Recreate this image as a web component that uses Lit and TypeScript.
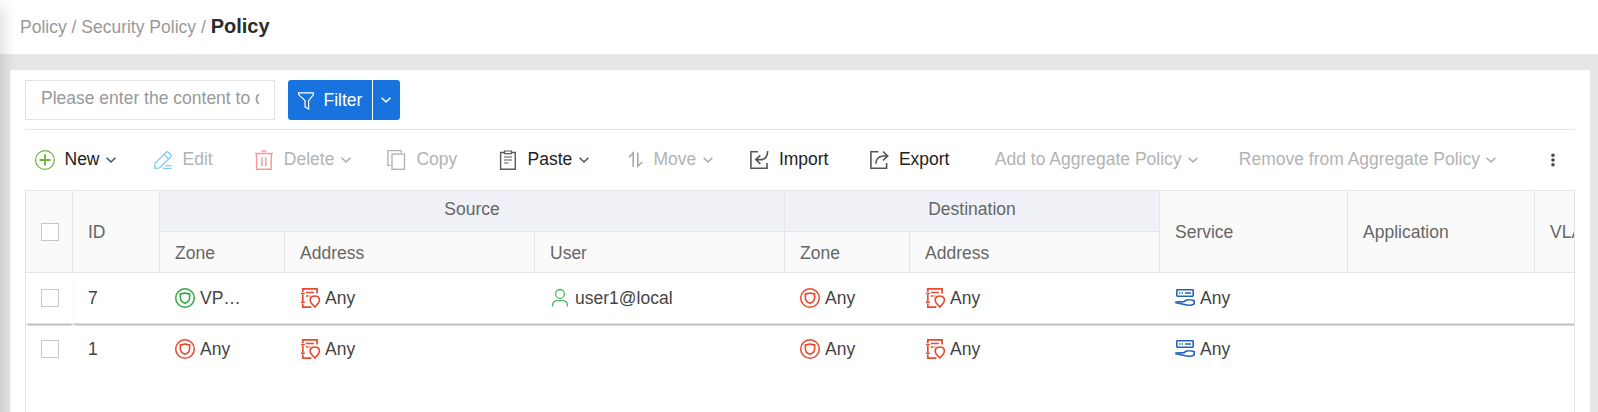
import { LitElement, html, css, svg, nothing } from "lit";
import { customElement, property } from "lit/decorators.js";

const glyphs: Record<string, unknown> = {
  plus: svg`<g stroke="#6db33f" fill="none"><circle cx="10" cy="10" r="9.4" stroke-width="1.2"/><path d="M4.5 10h11M10 4.5v11" stroke-width="1.9"/></g>`,
  edit: svg`<g stroke="#7fcbfb" fill="none" stroke-width="1.3"><path d="M1.7 18.3 2 13.2 13.2 2.2Q14.2 1.3 15.2 2.2L17.8 4.8Q18.7 5.8 17.8 6.8L6.7 17.8ZM11 4.4 15.6 9"/><path d="M12.3 15.6h6.2M9.8 18.4h9"/></g>`,
  trash: svg`<g stroke="#f29a98" fill="none"><path d="M7.3 .9h5M1 3.6h18" stroke-width="1.5"/><path d="M2.6 4v15.2h14.6V4" stroke-width="1.4"/><path d="M8 7.2v8.8M11.8 7.2v8.8" stroke-width="1.4"/></g>`,
  copy: svg`<g stroke="#b0b0b0" fill="none" stroke-width="1.3"><path d="M3.5 15.4H.9V.7h13.2v2"/><rect x="5" y="4" width="12.5" height="15.3"/></g>`,
  paste: svg`<g stroke="#5c5c5c" fill="none" stroke-width="1.4"><path d="M6 2.5H2.6v16.8h14.7V2.5H14"/><path d="M6.4 1h7v2.6h-7z" stroke-width="1.2"/><path d="M6 7h8M6 10h8M6 13h4.5" stroke-width="1.2"/></g>`,
  move: svg`<g stroke="#a8a8a8" fill="none" stroke-width="1.6"><path d="M4.9 7.2 9.2 3v14M13.8 2.6v13.6L18.4 12"/></g>`,
  import: svg`<g stroke="#555" fill="none" stroke-width="1.6"><path d="M9 1.8H1.9v16.4H18V13"/><path d="M11.3 5.3 6.8 9.6l4.5 4.2M7 9.6h5.5Q18.4 9 18.7 1"/></g>`,
  export: svg`<g stroke="#555" fill="none" stroke-width="1.6"><path d="M9.4 1.8H1.9v16.4H17.6V13"/><path d="M14 1.7l4.7 4.3L14 10.3M18.5 6H14Q7.2 6.6 6.8 13.8"/></g>`,
  filter: svg`<path d="M2.6 1.8h14.8v1.8L12.6 9.6v8.4l-3.6-2.2V9.6L2.6 3.6z" stroke="#fff" stroke-width="1.2" fill="none"/>`,
  dots: svg`<g fill="#4a4a4a"><circle cx="10" cy="5.3" r="1.8"/><circle cx="10" cy="10" r="1.8"/><circle cx="10" cy="14.7" r="1.8"/></g>`,
  zone: svg`<g stroke="currentColor" fill="none"><circle cx="10" cy="10" r="9.3" stroke-width="1.5"/><path d="M10 5.1Q12.4 5.9 14.6 5.9V10.2Q14.4 13.6 10 15.3 5.6 13.6 5.4 10.2V5.9Q7.6 5.9 10 5.1z" stroke-width="1.6"/></g>`,
  address: svg`<g stroke="#e8492f" fill="none" stroke-width="1.7"><path d="M2.8 4V.9h14.3V5.5M2.8 6.4V13.6M2.8 15.6V19.1H11.4"/><path d="M1 5.5h3.8M1 14.3h3.8M6 4.4h7.9M6 8h2.4M9.4 8h1" stroke-width="1.5"/><path d="M14.8 19 11.2 15Q8.7 10.6 12.1 8.5 14.8 7.4 17.5 8.5 20.8 10.6 18.4 15z" stroke-width="1.6"/></g>`,
  user: svg`<g stroke="#4db863" fill="none" stroke-width="1.3"><circle cx="10" cy="5.9" r="4.4"/><path d="M2.6 18.6V17Q2.8 12.7 7.6 12.7h4.8Q17.2 12.7 17.4 17V18.6"/></g>`,
  service: svg`<g stroke="#2265b8" fill="none" stroke-width="1.6"><rect x="1.8" y="1.8" width="16.4" height="6.4" rx=".6"/><path d="M4 5h1.4M6.6 5H8M10 5h6"/><path d="M.9 14.1 9 13.6Q10.8 11.6 14 11.7 17 11.7 19.2 12.7V15.9Q16.5 17.6 13 17.2L1 14.8z" stroke-linejoin="round"/></g>`,
};

const icon = (name: string, cls = "") =>
  html`<svg class="icon ${cls}" viewBox="0 0 20 20">${glyphs[name]}</svg>`;

const chevron = html`<svg class="chev" viewBox="0 0 10 6"><path d="M.6 .7 5 5 9.4 .7" fill="none" stroke="currentColor" stroke-width="1.6"/></svg>`;

@customElement("policy-toolbar")
class PolicyToolbar extends LitElement {
  static styles = css`
    :host { display: grid; height: 60px; padding: 0 0 0 10px; box-sizing: border-box; align-items: center; white-space: nowrap;
      grid-template-columns: 118px 101.3px 132.7px 111px 126px 125.4px 120px 125.4px 244px 304.6px 30px; }
    .item { display: flex; align-items: center; color: #222; }
    .item.off { color: #b3b3b3; }
    .icon { width: 20px; height: 20px; margin-right: 9.5px; flex: none; overflow: visible; }
    .label { line-height: 20px; padding-bottom: 2px; }
    .chev { width: 10px; height: 6px; margin-left: 6.3px; color: #44546a; overflow: visible; }
    .off .chev { color: #a3adba; }
  `;
  items: [string, string, boolean, boolean][] = [
    ["plus", "New", true, false], ["edit", "Edit", false, true], ["trash", "Delete", true, true],
    ["copy", "Copy", false, true], ["paste", "Paste", true, false], ["move", "Move", true, true],
    ["import", "Import", false, false], ["export", "Export", false, false],
    ["", "Add to Aggregate Policy", true, true], ["", "Remove from Aggregate Policy", true, true],
    ["dots", "", false, false],
  ];
  render() {
    return this.items.map(([ic, label, menu, off]) => html`<div class="item ${off ? "off" : ""}">
      ${ic ? icon(ic) : nothing}${label ? html`<span class="label">${label}</span>` : nothing}${menu ? chevron : nothing}</div>`);
  }
}

interface Policy { id: string; zone: string; zoneOk: boolean; user: string; lifted: boolean; }

@customElement("policy-table")
class PolicyTable extends LitElement {
  static styles = css`
    :host { display: block; flex: 1; border: 1px solid #e5e5e5; border-bottom: 0; overflow: hidden; white-space: nowrap; }
    .head { display: grid; width: 1634px; grid-template-columns: 47px 87px 125px 250px 250px 125px 250px 188px 187px 125px;
      grid-template-rows: 41px 41px; color: #666; background: #fafafa; }
    .th { box-sizing: border-box; border-right: 1px solid #e5e5e5; border-bottom: 1px solid #e5e5e5; padding-left: 15px; display: flex; align-items: center; }
    .tall { grid-row: span 2; }
    .title { padding-top: 2px; }
    .group { background: #eff1f6; justify-content: center; padding: 0 0 4px; }
    .src { grid-column: span 3; }
    .dst { grid-column: span 2; }
    .sub { padding-top: 2px; }
    .row { display: grid; grid-template-columns: 47px 1fr; width: 1634px; height: 51px; }
    .rest { display: grid; grid-template-columns: 87px 125px 250px 250px 125px 250px 188px 187px 125px; }
    .pin, .rest { box-sizing: border-box; height: 51px; background: #fff; }
    .lifted .pin, .lifted .rest { border-bottom: 1px solid #e2e2e2; box-shadow: 0 2px 2px -1px rgba(0,0,0,.38); }
    .lifted { position: relative; z-index: 1; }
    .lifted .pin { position: relative; z-index: 1; }
    .pin, .td { display: flex; align-items: center; padding-left: 15px; color: #444; }
    .row:not(.lifted) .pin, .row:not(.lifted) .rest { padding-bottom: 1px; }
    .box { width: 18px; height: 18px; box-sizing: border-box; border: 1px solid #c8c8c8; background: #fff; }
    .icon { width: 20px; height: 20px; margin-right: 5px; flex: none; overflow: visible; color: #e8492f; }
    .ok { color: #2fa849; }
  `;
  @property({ attribute: false }) rows: Policy[] = [
    { id: "7", zone: "VP…", zoneOk: true, user: "user1@local", lifted: true },
    { id: "1", zone: "Any", zoneOk: false, user: "", lifted: false },
  ];
  render() {
    return html`
      <div class="head">
        <div class="th tall"><span class="box"></span></div>
        <div class="th tall title">ID</div>
        <div class="th group src">Source</div>
        <div class="th group dst">Destination</div>
        <div class="th tall title">Service</div>
        <div class="th tall title">Application</div>
        <div class="th tall title">VLAN</div>
        <div class="th sub">Zone</div><div class="th sub">Address</div><div class="th sub">User</div>
        <div class="th sub">Zone</div><div class="th sub">Address</div>
      </div>
      ${this.rows.map((r) => html`<div class="row ${r.lifted ? "lifted" : ""}">
        <div class="pin"><span class="box"></span></div>
        <div class="rest">
          <div class="td">${r.id}</div>
          <div class="td">${icon("zone", r.zoneOk ? "ok" : "")}${r.zone}</div>
          <div class="td">${icon("address")}Any</div>
          <div class="td">${r.user ? html`${icon("user")}${r.user}` : nothing}</div>
          <div class="td">${icon("zone")}Any</div>
          <div class="td">${icon("address")}Any</div>
          <div class="td">${icon("service")}Any</div>
        </div>
      </div>`)}`;
  }
}

@customElement("app-root")
class AppRoot extends LitElement {
  static styles = css`
    :host { display: flex; flex-direction: column; position: relative; height: 412px; overflow: hidden; background: #e7e7e7;
      font: 17.5px "Liberation Sans", Arial, sans-serif; }
    .crumbs { height: 54px; box-sizing: border-box; padding: 0 0 2px 20px; background: #fff; color: #999; display: flex; align-items: center; }
    .trail { line-height: 52px; white-space: pre; }
    .here { font-weight: bold; font-size: 20px; color: #2b2b2b; }
    .panel { flex: 1; margin: 16px 8px 0 10px; padding: 10px 15px 0; background: #fff; display: flex; flex-direction: column; min-height: 0; }
    .search { height: 49px; display: flex; align-items: flex-start; border-bottom: 1px solid #e5e5e5; }
    .field { width: 250px; height: 40px; box-sizing: border-box; border: 1px solid #e2e2e2; padding: 0 15px; }
    .hint { display: block; overflow: hidden; white-space: nowrap; color: #999; line-height: 34px; }
    .btn { margin-left: 13px; display: flex; gap: 1px; height: 40px; color: #fff; }
    .main { width: 84px; box-sizing: border-box; padding-left: 8px; background: #1873df; border-radius: 3px 0 0 3px; display: flex; align-items: center; }
    .more { width: 27px; box-sizing: border-box; padding-right: 1px; background: #1873df; border-radius: 0 3px 3px 0; display: flex; align-items: center; justify-content: center; }
    .icon { width: 20px; height: 20px; margin: 2px 7.5px 0 0; overflow: visible; }
    .chev { width: 10px; height: 6px; overflow: visible; }
    .shade { position: absolute; left: -10px; top: 8px; width: 10px; height: 440px; box-shadow: 0 0 17px rgba(0,0,0,.26); pointer-events: none; }
  `;
  render() {
    return html`
      <div class="crumbs"><span class="trail">Policy / Security Policy / <span class="here">Policy</span></span></div>
      <div class="panel">
        <div class="search">
          <div class="field"><span class="hint">Please enter the content to query</span></div>
          <div class="btn"><div class="main">${icon("filter")}Filter</div><div class="more">${chevron}</div></div>
        </div>
        <policy-toolbar></policy-toolbar>
        <policy-table></policy-table>
      </div>
      <div class="shade"></div>`;
  }
}
